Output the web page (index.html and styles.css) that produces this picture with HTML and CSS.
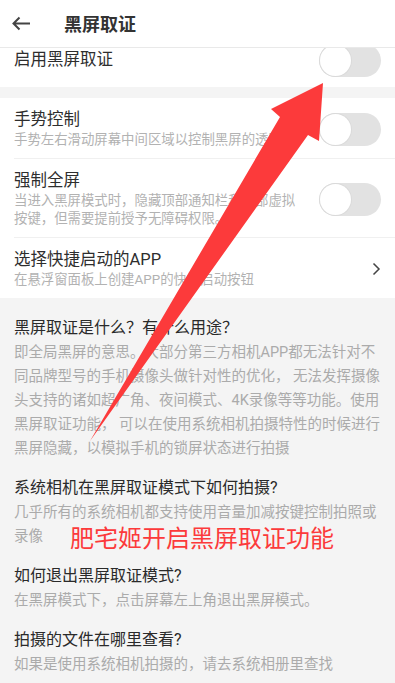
FILE: index.html
```html
<!DOCTYPE html>
<html lang="zh-CN">

<head>
    <meta charset="UTF-8">
    <title>黑屏取证</title>
    <link rel="stylesheet" href="styles.css">
</head>

<body>
    <div class="screen">
        <header class="topbar">
            <svg class="back" width="24" height="24" viewBox="0 0 24 24">
                <path d="M21 12.5H4.5M10.5 6.5l-6 6 6 6" />
            </svg>
            <h1 class="topbar-title">黑屏取证</h1>
        </header>

        <div class="content">
            <!-- first row is scrolled half under the bar -->
            <section class="group">
                <div class="item item-cut">
                    <div class="item-inner">
                        <div class="item-text">
                            <div class="item-title">启用黑屏取证</div>
                        </div>
                        <span class="switch"></span>
                    </div>
                </div>
            </section>

            <section class="group">
                <div class="item">
                    <div class="item-inner">
                        <div class="item-text">
                            <div class="item-title">手势控制</div>
                            <div class="item-desc one-line">手势左右滑动屏幕中间区域以控制黑屏的透明度</div>
                        </div>
                        <span class="switch"></span>
                    </div>
                </div>
                <div class="item">
                    <div class="item-inner">
                        <div class="item-text">
                            <div class="item-title">强制全屏</div>
                            <div class="item-desc">当进入黑屏模式时，隐藏顶部通知栏和底部虚拟<br>按键，但需要提前授予无障碍权限。</div>
                        </div>
                        <span class="switch"></span>
                    </div>
                </div>
                <div class="item">
                    <div class="item-inner">
                        <div class="item-text">
                            <div class="item-title">选择快捷启动的APP</div>
                            <div class="item-desc">在悬浮窗面板上创建APP的快捷启动按钮</div>
                        </div>
                        <svg class="chevron" width="9" height="14" viewBox="0 0 9 14">
                            <path d="M1.5 1.5l5.5 5.5-5.5 5.5" />
                        </svg>
                    </div>
                </div>
            </section>

            <section class="faq">
                <div class="faq-item">
                    <h2>黑屏取证是什么？有什么用途？</h2>
                    <p>即全局黑屏的意思。大部分第三方相机APP都无法针对不<br>同品牌型号的手机摄像头做针对性的优化， 无法发挥摄像<br>头支持的诸如超广角、夜间模式、4K录像等等功能。使用<br>黑屏取证功能， 可以在使用系统相机拍摄特性的时候进行<br>黑屏隐藏，以模拟手机的锁屏状态进行拍摄</p>
                </div>
                <div class="faq-item">
                    <h2>系统相机在黑屏取证模式下如何拍摄?</h2>
                    <p>几乎所有的系统相机都支持使用音量加减按键控制拍照或<br>录像</p>
                </div>
                <div class="faq-item">
                    <h2>如何退出黑屏取证模式?</h2>
                    <p>在黑屏模式下，点击屏幕左上角退出黑屏模式。</p>
                </div>
                <div class="faq-item">
                    <h2>拍摄的文件在哪里查看?</h2>
                    <p>如果是使用系统相机拍摄的，请去系统相册里查找</p>
                </div>
            </section>
        </div>

        <!-- red annotation drawn over the screenshot -->
        <svg class="mark-arrow" width="395" height="683" viewBox="0 0 395 683">
            <polygon points="323,83 319,141 308,135 90,441 280,117 271,109" />
        </svg>
        <div class="mark-caption">肥宅姬开启黑屏取证功能</div>
    </div>
</body>

</html>
```

FILE: styles.css
```css
html,
body {
    margin: 0;
    padding: 0;
}

body {
    background-color: #f4f4f4;
    font-family: Roboto, "Noto Sans CJK SC", sans-serif;
    color: #2e2e2e;
}

.screen {
    position: relative;
    width: 395px;
    height: 683px;
    overflow: hidden;
}

/* top bar */
.topbar {
    display: flex;
    align-items: center;
    height: 47px;
    background-color: #fff;
    border-bottom: 1px solid #e9e9e9;
}

.back {
    margin-left: 9px;
    margin-top: -2px;
}

.back path {
    fill: none;
    stroke: #444;
    stroke-width: 2;
}

.topbar-title {
    margin: -2px 0 0 31px;
    font-size: 18px;
    font-weight: 700;
    color: #333;
}

.content {
    overflow: hidden;
}

/* settings rows */
.group + .group {
    margin-top: 11px;
}

.item {
    background-color: #fff;
    padding-left: 14px;
}

.item-inner {
    display: flex;
    align-items: center;
    padding: 11px 14px 9px 0;
    border-bottom: 1px solid #f0f0f0;
}

.item:last-child .item-inner {
    border-bottom: none;
}

.item-cut {
    margin-top: -15px;
}

.item-cut .item-inner {
    height: 54px;
    padding: 0 14px 0 0;
    box-sizing: border-box;
}

.item-text {
    flex: 1;
    min-width: 0;
}

.item-title {
    font-size: 16.5px;
    line-height: 22px;
    color: #2e2e2e;
}

.item-desc {
    font-size: 13.4px;
    line-height: 18px;
    color: #b2b2b2;
    white-space: nowrap;
}

.one-line {
    overflow: hidden;
    text-overflow: ellipsis;
    margin-right: 10px;
}

.switch {
    position: relative;
    flex: none;
    width: 62px;
    height: 33px;
    border-radius: 17px;
    background-color: #e2e2e2;
}

.switch::before {
    content: "";
    position: absolute;
    left: 1px;
    top: 1px;
    width: 31px;
    height: 31px;
    border-radius: 50%;
    background-color: #fff;
    box-shadow: 0 0 0 1px #dadada;
}

.chevron {
    flex: none;
    margin-right: 0;
}

.chevron path {
    fill: none;
    stroke: #444;
    stroke-width: 1.5;
}

/* questions */
.faq {
    padding: 18px 14px 0;
}

.faq-item + .faq-item {
    margin-top: 15px;
}

.faq h2 {
    margin: 0 0 1px;
    font-size: 16px;
    font-weight: 400;
    line-height: 24px;
    color: #2a2a2a;
}

.faq p {
    margin: 0;
    font-size: 14.5px;
    line-height: 24px;
    color: #ababab;
    white-space: nowrap;
}

/* annotation */
.mark-arrow {
    position: absolute;
    left: 0;
    top: 0;
}

.mark-arrow polygon {
    fill: #fc3a3b;
}

.mark-caption {
    position: absolute;
    left: 70px;
    top: 527px;
    font-size: 24px;
    line-height: 24px;
    color: #fc3a3b;
    white-space: nowrap;
}
```
